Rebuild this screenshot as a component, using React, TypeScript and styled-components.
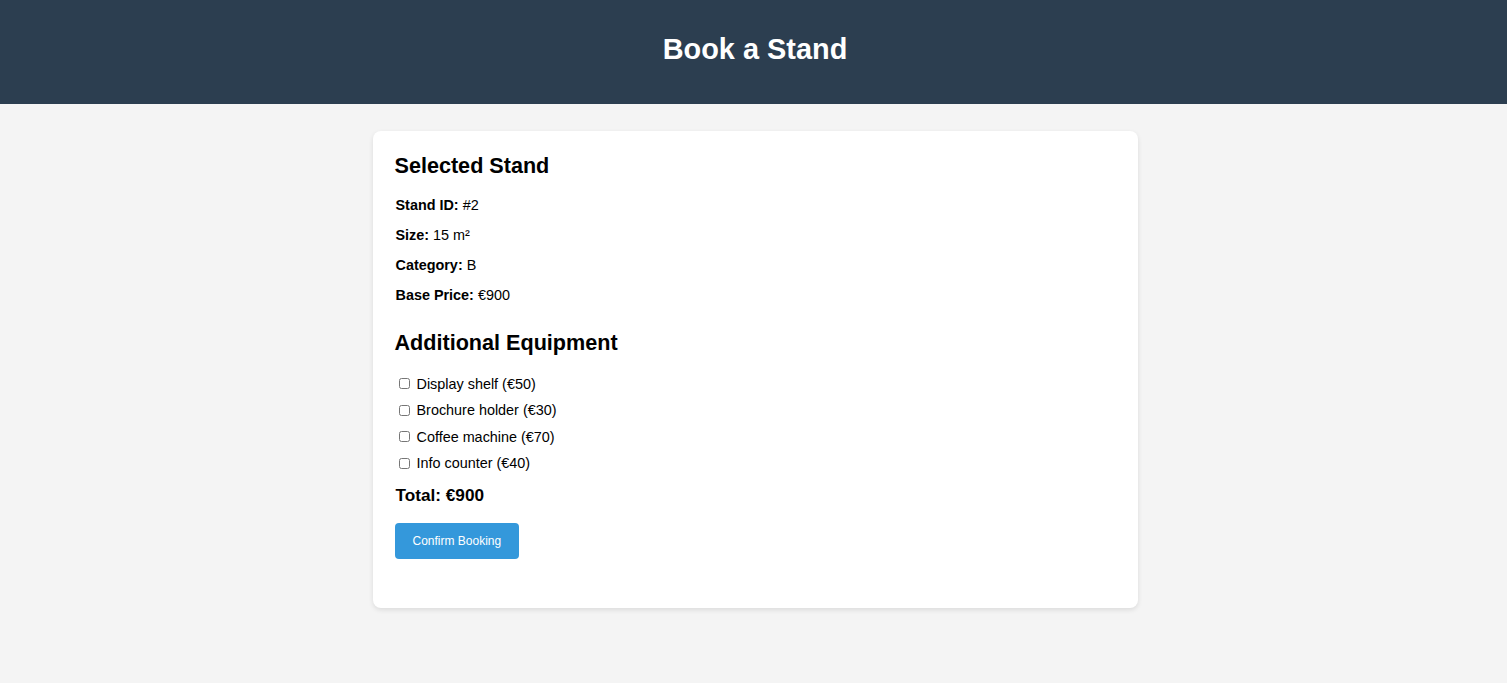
import React, { useState } from "react";
import styled, { createGlobalStyle } from "styled-components";

const GlobalStyle = createGlobalStyle`
	body {
		margin: 0;
		background: #f4f4f4;
		font-family: "Liberation Sans", Arial, sans-serif;
		color: #000;
	}
`;

const stand = { id: 2, size: 15, category: "B", basePrice: 900 };

const equipment = [
	{ id: "shelf", name: "Display shelf", price: 50 },
	{ id: "brochure", name: "Brochure holder", price: 30 },
	{ id: "coffee", name: "Coffee machine", price: 70 },
	{ id: "counter", name: "Info counter", price: 40 },
];

function App() {
	const [selected, setSelected] = useState<string[]>([]);

	const toggle = (id: string) => {
		setSelected((prev) =>
			prev.includes(id) ? prev.filter((x) => x !== id) : [...prev, id]
		);
	};

	const total =
		stand.basePrice +
		equipment
			.filter((e) => selected.includes(e.id))
			.reduce((sum, e) => sum + e.price, 0);

	return (
		<>
			<GlobalStyle />
			<Header>
				<h1>Book a Stand</h1>
			</Header>
			<Main>
				<Card>
					<SectionTitle>Selected Stand</SectionTitle>
					<Detail>
						<strong>Stand ID:</strong> #{stand.id}
					</Detail>
					<Detail>
						<strong>Size:</strong> {stand.size} m²
					</Detail>
					<Detail>
						<strong>Category:</strong> {stand.category}
					</Detail>
					<Detail>
						<strong>Base Price:</strong> €{stand.basePrice}
					</Detail>

					<SectionTitle $spaced>Additional Equipment</SectionTitle>
					<OptionList>
						{equipment.map((item) => (
							<Option key={item.id}>
								<input
									type="checkbox"
									checked={selected.includes(item.id)}
									onChange={() => toggle(item.id)}
								/>
								{item.name} (€{item.price})
							</Option>
						))}
					</OptionList>

					<Total>Total: €{total}</Total>
					<ConfirmButton>Confirm Booking</ConfirmButton>
				</Card>
			</Main>
		</>
	);
}

const Header = styled.header`
	background: #2c3e50;
	color: #fff;
	text-align: center;
	padding: 14px 0 19px 3px;

	h1 {
		margin: 0;
		font-size: 28.9px;
		line-height: 38px;
		padding: 16px 0 17px;
	}
`;

const Main = styled.main`
	display: flex;
	justify-content: center;
	padding: 27px 0 40px;
`;

const Card = styled.section`
	width: 765px;
	box-sizing: border-box;
	background: #fff;
	border-radius: 8px;
	box-shadow: 0 2px 5px rgba(0, 0, 0, 0.1);
	padding: 22px 22px 49px 23px;
	margin-left: 3px;
`;

const SectionTitle = styled.h2<{ $spaced?: boolean }>`
	font-size: 21.6px;
	margin: ${(p) => (p.$spaced ? "27px" : "0")} 0 18px -1px;
`;

const Detail = styled.p`
	font-size: 14.4px;
	line-height: 16px;
	margin: 14px 0;
`;

const OptionList = styled.div`
	display: flex;
	flex-direction: column;
	gap: 7.5px;
	margin-left: -1px;
`;

const Option = styled.label`
	display: flex;
	align-items: center;
	font-size: 14.4px;
	height: 19px;

	input {
		margin: 3px 7px 3px 4px;
		width: 11px;
		height: 11px;
	}
`;

const Total = styled.h3`
	font-size: 17.2px;
	margin: 12px 0 17px;
`;

const ConfirmButton = styled.button`
	background: #3498db;
	color: #fff;
	border: none;
	border-radius: 4px;
	font-family: "Liberation Sans", Arial, sans-serif;
	font-size: 12px;
	padding: 0 18px;
	height: 36px;
	margin-left: -1px;
	cursor: pointer;
`;

export default App;
